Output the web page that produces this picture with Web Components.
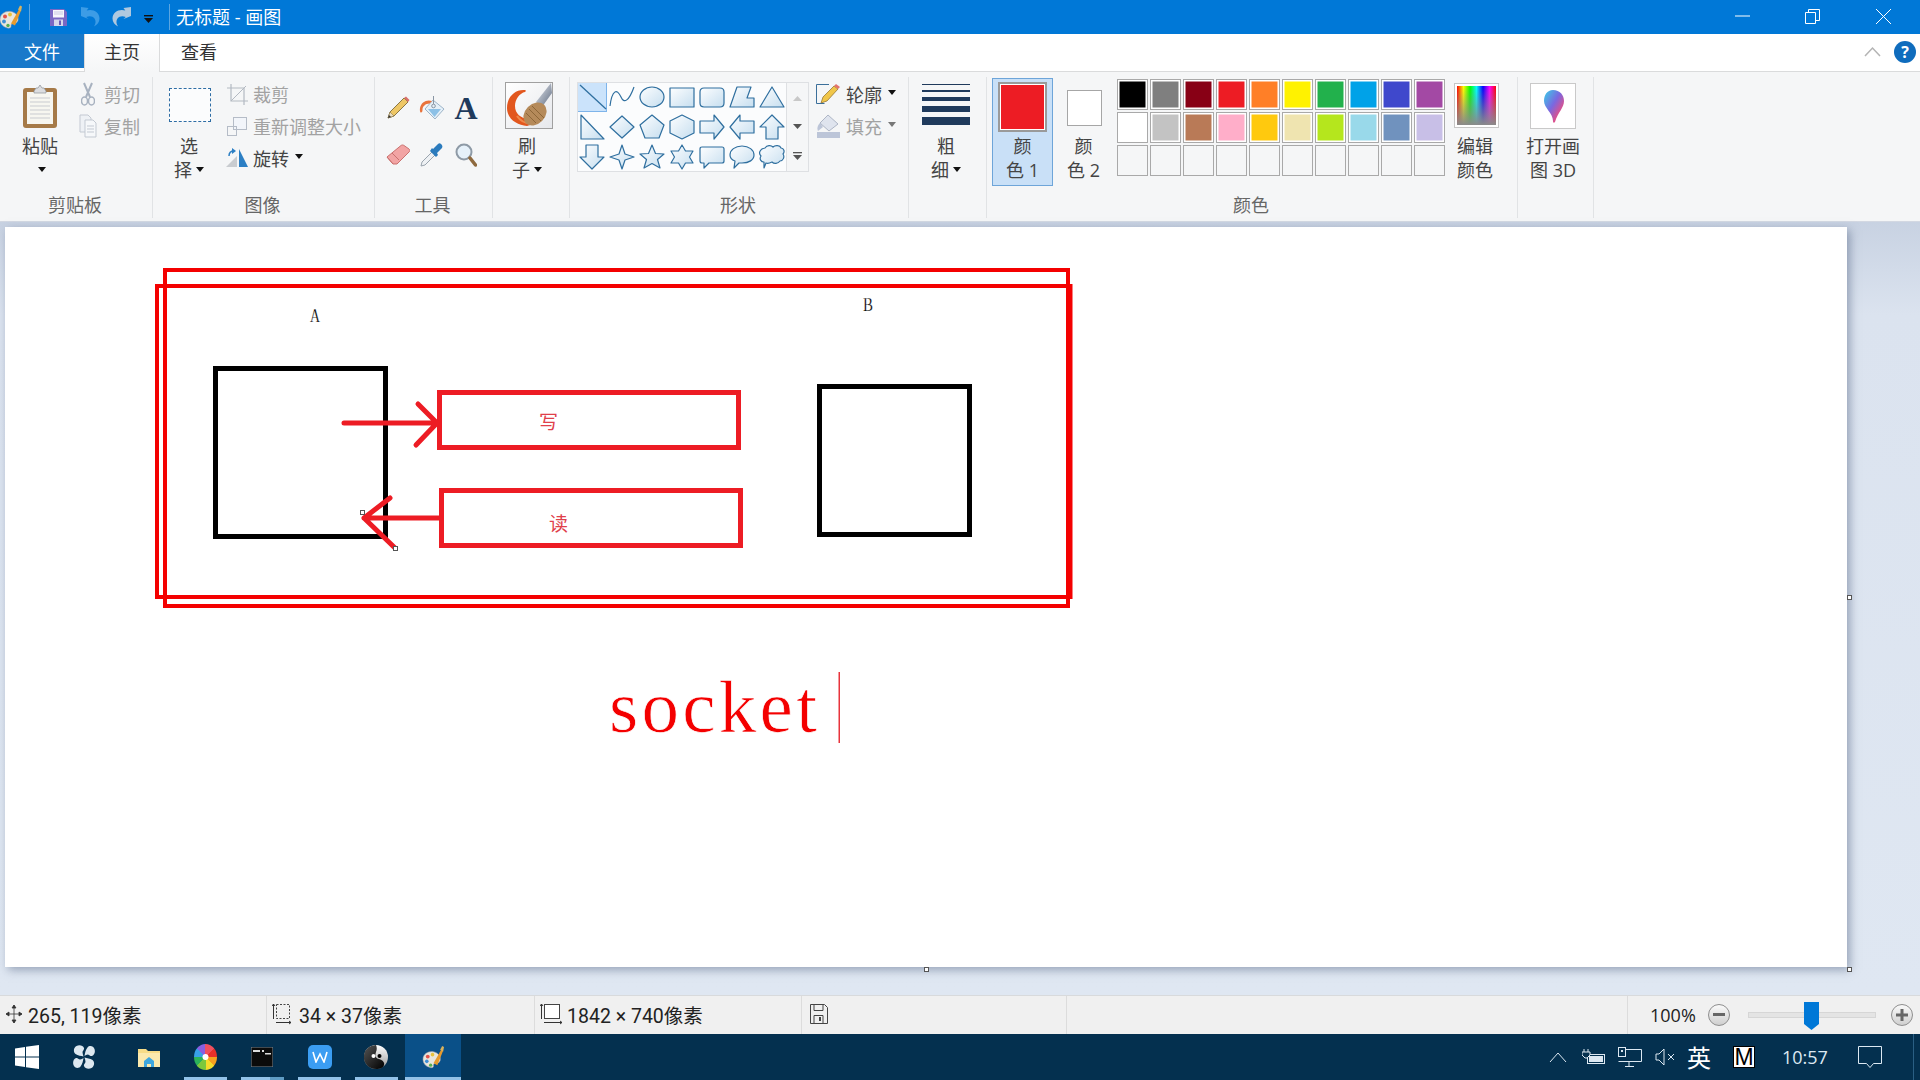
<!DOCTYPE html>
<html lang="zh">
<head>
<meta charset="utf-8">
<title>无标题 - 画图</title>
<style>
  html, body { margin: 0; height: 100%; overflow: hidden; }
  body { font-family: "Open Sans", "Noto Sans CJK SC", sans-serif; }
</style>
</head>
<body>
<paint-app></paint-app>
<script>
// fuente comun para todo el programa
const UI_FONT = '"Open Sans", "Noto Sans CJK SC", sans-serif';

// Icono de la paleta, se usa en la barra de titulo y en la barra de tareas
function paletteIcon(w, h) {
    return `<svg width="${w}" height="${h}" viewBox="0 0 24 26">
        <path d="M1 15C1 9 7 6 12 7c5 1 8 5 7 9-1 3-3 3-5 3-2 0-2 2-2 3 0 2-3 2-5 1-3-1-6-4-6-8z" fill="#e9e6dc" stroke="#8f98a8" stroke-width=".6"/>
        <circle cx="6" cy="12" r="2" fill="#e2524a"/><circle cx="11" cy="10" r="1.9" fill="#e8c23a"/>
        <circle cx="5" cy="17" r="1.9" fill="#3f8fd6"/><circle cx="9" cy="21" r="1.7" fill="#55ad4f"/>
        <path d="M12 19L20 5l2 1-6 15z" fill="#e79a2c"/><path d="M19 5l2-4 2 1-1 5z" fill="#d9b25c"/>
    </svg>`;
}

// Barra de titulo de la ventana
class TitleBar extends HTMLElement {
    constructor() {
        super();
        this.attachShadow({ mode: 'open' });
        this.shadowRoot.innerHTML = `
            <style>
                :host { display: flex; align-items: center; height: 34px; background: #0078d7; color: #fff; font: 18px ${UI_FONT}; }
                .logo { width: 24px; margin-left: -1px; display: flex; }
                .sep { width: 1px; height: 26px; background: #5ba6e2; }
                .qa { display: flex; align-items: flex-start; }
                .win { margin-left: auto; display: flex; }
                .win svg { display: block; }
                .title { margin-left: 6px; line-height: 34px; white-space: pre; }
            </style>
            <span class="logo">${paletteIcon(24, 27)}</span>
            <span class="sep" style="margin-left:6px"></span>
            <span class="qa" style="margin-left:20px">
                <svg style="margin-top:1px" width="17" height="17" viewBox="0 0 17 17"><path d="M0 0h14l3 3v14H0z" fill="#7a68c4"/><rect x="3" y="1" width="11" height="7.500" fill="#f6f6fb"/><path d="M4 3h9M4 5h9" stroke="#c9c9e2"/><rect x="4" y="10.500" width="9" height="6.500" fill="#d5d7ea"/><rect x="9" y="11.500" width="2" height="4.500" fill="#6d5bb5"/></svg>
                <svg style="margin-left:14px;margin-top:-1px" width="19" height="20" viewBox="0 0 19 20"><path d="M0 0l7.500 1-1.800 2.500c6-2 12.800 1.500 12.800 8 0 3.500-2.200 6.500-5.500 8 2-3 2-6 .5-8-1.800-2.500-5-3-8.300-1.500L7.500 12 0 9z" fill="#3d9ce6"/></svg>
                <svg style="margin-left:12px;margin-top:-1px" width="19" height="20" viewBox="0 0 19 20"><path d="M19 0l-7.500 1 1.800 2.500C7.300 1.500.5 5 .5 11.500c0 3.500 2.200 6.500 5.500 8-2-3-2-6-.5-8 1.800-2.500 5-3 8.300-1.500L11.500 12 19 9z" fill="#afc8df"/></svg>
                <svg style="margin-left:13px;margin-top:7px" width="9" height="9" viewBox="0 0 9 9"><rect y="0" width="9" height="1.400" fill="#111"/><path d="M0 3h9L4.500 8z" fill="#111"/></svg>
            </span>
            <span class="sep" style="margin-left:16px"></span>
            <span class="title">无标题 - 画图</span>
            <span class="win">
                <svg width="70" height="34"><rect x="1" y="15.500" width="15" height="1" fill="#fff"/></svg>
                <svg width="71" height="34"><path d="M1.500 12.500h10v11h-10zM4.500 12V9.500h11v11H12" fill="none" stroke="#fff"/></svg>
                <svg width="45" height="34"><path d="M1 9l15 15M16 9L1 24" stroke="#fff" fill="none"/></svg>
            </span>`;
    }
}
customElements.define('title-bar', TitleBar);

// Fila de pestañas del ribbon
class RibbonTabs extends HTMLElement {
    constructor() {
        super();
        this.attachShadow({ mode: 'open' });
        this.shadowRoot.innerHTML = `
            <style>
                :host { display: flex; height: 38px; background: #fff; font: 18px ${UI_FONT}; color: #333; box-sizing: border-box; border-bottom: 1px solid #dadbdc; }
                .tab { display: flex; justify-content: center; padding-top: 6px; box-sizing: border-box; line-height: 24px; }
                .file { width: 84px; height: 34px; background: #1979ca; color: #fff; }
                .home { width: 76px; height: 38px; border: 1px solid #dadbdc; border-width: 0 1px; background: linear-gradient(#fff, #f5f6f7); }
                .view { width: 78px; }
                .right { margin-left: auto; display: flex; align-items: center; padding: 0 4px 2px 0; gap: 13px; }
                .help { width: 22px; height: 22px; border-radius: 50%; background: #0f6cbd; color: #fff; font: bold 16px/22px "Open Sans", sans-serif; text-align: center; }
            </style>
            <div class="tab file">文件</div>
            <div class="tab home">主页</div>
            <div class="tab view">查看</div>
            <div class="right">
                <svg width="17" height="11" viewBox="0 0 17 11"><path d="M1 10l7.500-8L16 10" fill="none" stroke="#b4b4b4" stroke-width="1.500"/></svg>
                <div class="help">?</div>
            </div>`;
    }
}
customElements.define('ribbon-tabs', RibbonTabs);

// Grupo del ribbon con su etiqueta abajo
class RbGroup extends HTMLElement {
    constructor() {
        super();
        this.attachShadow({ mode: 'open' });
    }
    connectedCallback() {
        this.shadowRoot.innerHTML = `
            <style>
                :host { display: flex; flex-direction: column; position: relative; box-sizing: border-box; height: 149px; flex: none; }
                :host::after { content: ''; position: absolute; right: 0; top: 5px; bottom: 3px; width: 1px; background: #e1e3e5; }
                .body { flex: 1; display: flex; min-height: 0; padding-left: var(--pl, 0); }
                .label { height: 30px; margin-bottom: 1px; padding-right: 3px; line-height: 30px; text-align: center; color: #666; font-size: 18px; }
            </style>
            <div class="body"><slot></slot></div>
            <div class="label" part="label">${this.getAttribute('label') || ''}</div>`;
    }
}
customElements.define('rb-group', RbGroup);

// Boton grande: icono arriba y dos lineas de texto
class BigBtn extends HTMLElement {
    constructor() {
        super();
        this.attachShadow({ mode: 'open' });
    }
    connectedCallback() {
        const a = this.getAttribute('a') || '';
        const b = this.getAttribute('b') || '';
        const caret = this.hasAttribute('caret') ? '<i class="caret"></i>' : '';
        this.shadowRoot.innerHTML = `
            <style>
                :host { display: block; flex: none; box-sizing: border-box; --top: 0px; }
                :host([sel]) { --top: 6px; margin-top: 6px; height: 108px; background: #c9e0f7; box-shadow: inset 0 0 0 1px #6ea5d9; }
                .icon { height: calc(62px - var(--top)); padding-top: calc(5px - var(--top) / 2); box-sizing: border-box; display: flex; align-items: center; justify-content: center; }
                .line { height: 24px; line-height: 24px; text-align: center; white-space: nowrap; color: #444; font-size: 18px; }
                .caret { display: inline-block; width: 0; height: 0; margin-left: 4px; vertical-align: 5px; border: 4px solid transparent; border-top: 5px solid #111; border-bottom: 0; }
            </style>
            <div class="icon"><slot></slot></div>
            <div class="line">${a}</div>
            <div class="line">${b}${caret}</div>`;
    }
}
customElements.define('big-btn', BigBtn);

// Boton pequeño con icono y texto en una fila
class SmallBtn extends HTMLElement {
    constructor() {
        super();
        this.attachShadow({ mode: 'open' });
    }
    connectedCallback() {
        const caret = this.hasAttribute('caret') ? '<i class="caret"></i>' : '';
        this.shadowRoot.innerHTML = `
            <style>
                :host { display: flex; align-items: center; height: 32px; color: #444; font-size: 18px; white-space: nowrap; }
                :host([off]) { color: #a2a2a2; }
                .icon { width: 22px; margin-right: 5px; display: flex; justify-content: center; }
                .caret { display: inline-block; width: 0; height: 0; margin-left: 6px; margin-top: -4px; border: 4px solid transparent; border-top: 5px solid #111; border-bottom: 0; }
                :host([off]) .caret { border-top-color: #777; }
            </style>
            <span class="icon"><slot></slot></span>
            <span>${this.getAttribute('label')}</span>${caret}`;
    }
}
customElements.define('small-btn', SmallBtn);

// Galeria de formas
const SHAPES = [
    '', 'M3 24C5 8 10 6 14 15c3 7 8 4 13-10', 'E', 'M3 6h24v19H3z', 'M7 6h16q4 0 4 4v11q0 4-4 4H7q-4 0-4-4V10q0-4 4-4z', 'M3 25L10 5h14l-4 11h7v9z', 'M15 5l12 20H3z',
    'M4 3l23 24H4z', 'M15 4l12 11-12 11L3 15z', 'M15 3l12 10-5 13H8L3 13z', 'M15 3l12 6v12l-12 6-12-6V9z', 'M3 9h14V3l10 12-10 12v-6H3z', 'M27 9H13V3L3 15l10 12v-6h14z', 'M15 3l12 12h-6v12H9V15H3z',
    'M9 3h12v12h6L15 27 3 15h6z', 'M15 3l3 9 9 3-9 3-3 9-3-9-9-3 9-3z', 'M15 3l3.500 8.500 8.500.5-6.500 5.500L23 26l-8-4.500L7 26l2.500-8.500L3 12l8.500-.5z', 'M15 3l3.500 6H26l-3.500 6 3.500 6h-7.500L15 27l-3.500-6H4l3.500-6L4 9h7.500z',
    'M5 5h20q2 0 2 2v12q0 2-2 2H12l-5 5v-5H5q-2 0-2-2V7q0-2 2-2z', 'M15 4c7 0 12 4 12 9s-5 8-12 8h-3l-5 5 1-7c-3-1-5-3-5-6 0-5 5-9 12-9z', 'M8 6c2-3 6-3 8-1 2-2 7-2 8 1 3 0 4 4 2 6 2 3 0 7-3 7-2 3-6 3-8 1-2 1-4 2-6 1l-2 5v-6c-3 0-5-3-3-6-3-3-1-7 4-8z'
];

class ShapeGallery extends HTMLElement {
    constructor() {
        super();
        this.attachShadow({ mode: 'open' });
        const cells = SHAPES.map((d, i) => {
            if (i === 0) return `<div class="cell sel"><svg width="30" height="30"><path d="M3 3l26 24" stroke="#2f6f9f" stroke-width="1.300"/></svg></div>`;
            const inner = d === 'E'
                ? `<ellipse cx="15" cy="15" rx="12" ry="10"/>`
                : `<path d="${d}"${i === 1 ? ' style="fill:none"' : ''}/>`;
            return `<div class="cell"><svg width="30" height="30">${inner}</svg></div>`;
        }).join('');
        this.shadowRoot.innerHTML = `
            <style>
                :host { display: flex; flex: none; height: 90px; margin-top: 10px; }
                .grid { display: grid; grid-template-columns: repeat(7, 30px); grid-auto-rows: 30px; background: #fbfcfd; outline: 1px solid #dee0e3; outline-offset: -1px; }
                .cell svg { display: block; fill: url(#sg); stroke: #2f6f9f; stroke-width: 1.200; stroke-linejoin: round; }
                .sel { background: #cbe3fb; box-shadow: inset 0 0 0 1px #7eb4ea; }
                .scroll { width: 22px; display: grid; grid-template-rows: 1fr 1fr 1fr; border: 1px solid #dee0e3; border-left: 0; box-sizing: border-box; justify-items: center; align-items: center; }
                .defs { position: absolute; width: 0; height: 0; }
            </style>
            <svg class="defs"><defs><linearGradient id="sg" x1="0" y1="0" x2="1" y2="1"><stop offset="0" stop-color="#fdfeff"/><stop offset="1" stop-color="#c6deef"/></linearGradient></defs></svg>
            <div class="grid">${cells}</div>
            <div class="scroll">
                <svg width="9" height="6"><path d="M0 6l4.500-5L9 6z" fill="#c8c8c8"/></svg>
                <svg width="9" height="6"><path d="M0 0l4.500 5L9 0z" fill="#555"/></svg>
                <svg width="9" height="8"><rect width="9" height="1.300" fill="#555"/><path d="M0 3h9L4.500 8z" fill="#555"/></svg>
            </div>`;
    }
}
customElements.define('shape-gallery', ShapeGallery);

// Paleta de colores de 3 filas
const COLORS = ['#000000', '#7f7f7f', '#880015', '#ed1c24', '#ff7f27', '#fff200', '#22b14c', '#00a2e8', '#3f48cc', '#a349a4',
    '#ffffff', '#c3c3c3', '#b97a57', '#ffaec9', '#ffc90e', '#efe4b0', '#b5e61d', '#99d9ea', '#7092be', '#c8bfe7'];

class ColorGrid extends HTMLElement {
    constructor() {
        super();
        this.attachShadow({ mode: 'open' });
        const cells = COLORS.map(c => `<div class="c on" style="background:${c}"></div>`).join('') + '<div class="c"></div>'.repeat(10);
        this.shadowRoot.innerHTML = `
            <style>
                :host { display: grid; flex: none; grid-template-columns: repeat(10, 31px); grid-auto-rows: 31px; gap: 2px; margin: 7px 0 0 3px; height: 97px; }
                .c { border: 1px solid #a9a9a9; box-sizing: border-box; }
                .on { box-shadow: inset 0 0 0 1.500px #fff; }
            </style>${cells}`;
    }
}
customElements.define('color-grid', ColorGrid);

// Ribbon completo, cada grupo con sus botones
class PaintRibbon extends HTMLElement {
    constructor() {
        super();
        this.attachShadow({ mode: 'open' });
        this.shadowRoot.innerHTML = `
            <style>
                :host { display: flex; height: 150px; box-sizing: border-box; background: #f5f6f7; border-bottom: 1px solid #d3d8e2; font: 18px ${UI_FONT}; color: #444; }
                svg { display: block; flex: none; }
                .col { display: flex; flex-direction: column; padding-top: 6px; flex: none; }
                .tools { display: grid; grid-template-columns: repeat(3, 34px); grid-auto-rows: 47px; padding: 12px 0 0 6px; justify-items: center; align-items: center; }
                .font-a { font: bold 32px/1 "Liberation Serif", serif; color: #1f3a5c; }
                .lines { display: flex; flex-direction: column; width: 48px; margin-top: -2px; }
                .lines i { display: block; background: #1f3a5c; }
                .rainbow { width: 43px; height: 43px; margin-left: 2px; box-sizing: border-box; border: 2px solid #fff; outline: 1px solid #c6c6c6; background: linear-gradient(rgba(128,128,128,0), #8a8a8a), linear-gradient(90deg, #f00, #ff0, #0f0, #0ff, #00f, #f0f, #f00); }
                .sw1 { width: 47px; height: 48px; box-sizing: border-box; background: #ed1c24; border: 2px solid #fff; outline: 2px solid #9a9a9a; outline-offset: -1px; }
                .sw2 { width: 35px; height: 36px; box-sizing: border-box; background: #fff; border: 1px solid #a6a6a6; margin-top: 4px; }
                .dash { width: 42px; height: 34px; margin-left: 2px; box-sizing: border-box; border: 1px dashed #2e6da4; background: #fbfcfd; margin-top: -1px; }
            </style>

            <rb-group label="剪贴板" style="width:153px;--pl:19px">
                <big-btn a="粘贴" caret style="width:42px">
                    <svg width="34" height="44" viewBox="0 0 34 44"><rect x="0" y="4" width="34" height="40" rx="3" fill="#a67a48"/><rect x="4" y="8" width="26" height="32" fill="#f7f6f0"/><path d="M7 14h20M7 18h20M7 22h20M7 26h20M7 30h20M7 34h20" stroke="#c9cbd0"/><path d="M11 7l2-3h2l2-3 2 3h2l2 3v2H11z" fill="#dcdde0" stroke="#8b8f96" stroke-width=".7"/></svg>
                </big-btn>
                <div class="col" style="margin-left:16px">
                    <small-btn label="剪切" off><svg width="14" height="24" viewBox="0 0 14 24"><path d="M3 1l6 14M11 1L5 15" stroke="#a8b2c0" stroke-width="2" fill="none"/><ellipse cx="3.500" cy="19" rx="3" ry="4" fill="none" stroke="#a8b2c0" stroke-width="1.500"/><ellipse cx="10.500" cy="19" rx="3" ry="4" fill="none" stroke="#a8b2c0" stroke-width="1.500"/></svg></small-btn>
                    <small-btn label="复制" off><svg width="18" height="24" viewBox="0 0 18 24"><path d="M1 1h8l3 3v14H1z" fill="#eef1f5" stroke="#c3c9d2"/><path d="M6 6h8l3 3v14H6z" fill="#f6f8fa" stroke="#c3c9d2"/><path d="M8 12h7M8 15h7M8 18h7" stroke="#c3c9d2"/></svg></small-btn>
                </div>
            </rb-group>

            <rb-group label="图像" style="width:222px;--pl:11px">
                <big-btn a="选" b="择" caret style="width:50px"><div class="dash"></div></big-btn>
                <div class="col" style="margin-left:12px">
                    <small-btn label="裁剪" off><svg width="21" height="21" viewBox="0 0 21 21"><path d="M4 0v17h17M0 4h17v17" fill="none" stroke="#b3b9c2" stroke-width="1.200"/><path d="M4 17L19 2" stroke="#b3b9c2"/></svg></small-btn>
                    <small-btn label="重新调整大小" off><svg width="20" height="19" viewBox="0 0 20 19"><rect x="6.500" y=".5" width="13" height="12" fill="#f2f5fa" stroke="#b5bcc7"/><rect x=".5" y="9.500" width="9" height="9" fill="none" stroke="#b5bcc7"/></svg></small-btn>
                    <small-btn label="旋转" caret><svg width="22" height="20" viewBox="0 0 22 20"><path d="M13 1l9 18h-9z" fill="#2c7fc4"/><path d="M11 19H0l11-11z" fill="#c9ccd0"/><path d="M3 8c0-3 2-5 5-5" fill="none" stroke="#2c7fc4" stroke-width="1.500"/><path d="M6 0l4 3-4 3z" fill="#2c7fc4"/></svg></small-btn>
                </div>
            </rb-group>

            <rb-group label="工具" style="width:118px">
                <div class="tools">
                    <svg width="23" height="23" viewBox="0 0 23 23"><path d="M1 22l2-6L17 2l4 4L7 20z" fill="#eec766" stroke="#7d6a3a" stroke-width=".9"/><path d="M1 22l2-6 4 4z" fill="#eadcc0" stroke="#7d6a3a" stroke-width=".5"/><path d="M1 22l1-3 2 2z" fill="#333"/><path d="M17 2l2-1.500 3.500 3.500L21 6z" fill="#d9706a"/></svg>
                    <svg width="26" height="24" viewBox="0 0 26 24"><path d="M14 4l11 9-9 10L6 13z" fill="#e6f0f8" stroke="#9db4c8"/><path d="M9 13h13l-6.500 8z" fill="#8cc0e6"/><path d="M13 5c-5-2-11 1-12 7-.3 2 0 4 .5 4.500 1.500.5 2-1 2-3 0-3 3-6 7-6z" fill="#e9733c"/><circle cx="14.500" cy="10" r="1.800" fill="none" stroke="#8895a3"/><path d="M14.500 0v8" stroke="#8895a3"/></svg>
                    <span class="font-a">A</span>
                    <svg width="24" height="21" viewBox="0 0 24 21"><path d="M1 13L15 1.500c1-.7 2-.7 3 0l5 3.500c1 1 1 2 0 3L11 20H7z" fill="#f2a4a4" stroke="#c9716f"/><path d="M1 13l6 7M6 9l7 7" fill="none" stroke="#c9716f"/></svg>
                    <svg width="24" height="24" viewBox="0 0 24 24"><path d="M1 23l1-4L12 9l3 3L5 22z" fill="#eef1f4" stroke="#9aa4ae"/><path d="M10 8l6 6 2-2-1-2 5-5c1-2 0-3-1-4s-2-1-3 0l-5 5-1-1z" fill="#2b7bbd"/></svg>
                    <svg width="22" height="24" viewBox="0 0 22 24"><circle cx="9" cy="9" r="7.500" fill="#e6f1fa" stroke="#8e9aa6" stroke-width="2"/><path d="M15 15l5.500 7" stroke="#8f6a3f" stroke-width="3.500" stroke-linecap="round"/></svg>
                </div>
            </rb-group>

            <rb-group label="" style="width:77px;--pl:4px">
                <big-btn a="刷" b="子" caret style="width:60px">
                    <svg style="margin-left:4px" width="48" height="47" viewBox="0 0 48 47"><defs><linearGradient id="bg" x1="0" y1="0" x2="1" y2="1"><stop offset="0" stop-color="#fff"/><stop offset="1" stop-color="#e6e8ec"/></linearGradient><linearGradient id="hd" x1="0" y1="0" x2="1" y2="1"><stop offset="0" stop-color="#e8ebf0"/><stop offset="1" stop-color="#5d6a80"/></linearGradient></defs><rect x=".5" y=".5" width="47" height="46" fill="url(#bg)" stroke="#a0a0a0"/><path d="M46 1L31 20l6 5L47 11z" fill="url(#hd)"/><path d="M20 8c1 0 1 1 0 2-5 1-10 7-10 14 0 8 6 12 13 13l8 4-9 3C12 43 2 37 2 26 2 15 10 7 20 8z" fill="#e2571e"/><path d="M12 34c4 6 10 8 17 7" fill="none" stroke="#f08a4a" stroke-width="2"/><ellipse cx="30" cy="32" rx="13" ry="10" transform="rotate(-45 30 32)" fill="#b58a5a"/><path d="M24 27l12 12M27 24l12 12M21 31l10 10" stroke="#8d6638"/></svg>
                </big-btn>
            </rb-group>

            <rb-group label="形状" style="width:339px;--pl:7px">
                <shape-gallery></shape-gallery>
                <div class="col" style="margin-left:10px">
                    <small-btn label="轮廓" caret><svg style="margin-left:-4px" width="25" height="20" viewBox="0 0 25 20"><path d="M13 .5H.5v19h8" fill="none" stroke="#3b6f9a"/><path d="M5 19l2-6L18 2l4 3-11 12z" fill="#f0c64a" stroke="#8a6a2a" stroke-width=".7"/><path d="M18 2l2-2 4 3-2 2z" fill="#e3736d"/></svg></small-btn>
                    <small-btn label="填充" off caret><svg style="margin-left:-4px" width="25" height="24" viewBox="0 0 25 24"><path d="M12 1l10 9-9 7-9-8z" fill="#dfe4ee" stroke="#aeb6c6"/><path d="M1 18h23v6H1z" fill="#bcc5d8"/><path d="M4 9c-3 3-3 6-2 8l5-4z" fill="#bcc5d8"/></svg></small-btn>
                </div>
            </rb-group>

            <rb-group label="" style="width:78px;--pr:4px">
                <big-btn a="粗" b="细" caret style="width:74px">
                    <div class="lines">
                        <i style="height:1px"></i><i style="height:2px;margin-top:5px"></i><i style="height:4px;margin-top:5px"></i><i style="height:6px;margin-top:5px"></i><i style="height:8px;margin-top:5px"></i>
                    </div>
                </big-btn>
            </rb-group>

            <rb-group label="颜色" style="width:531px;--pl:5px">
                <big-btn a="颜" b="色 1" sel style="width:61px"><div class="sw1"></div></big-btn>
                <big-btn a="颜" b="色 2" style="width:61px"><div class="sw2" style="margin-left:1px"></div></big-btn>
                <color-grid></color-grid>
                <big-btn a="编辑" b="颜色" style="width:52px;margin-left:4px"><div class="rainbow"></div></big-btn>
            </rb-group>

            <rb-group label="" style="width:76px">
                <big-btn a="打开画" b="图 3D" style="width:70px">
                    <svg width="46" height="46" viewBox="0 0 46 46"><defs><linearGradient id="drop" x1="0" y1="0" x2="1" y2="1"><stop offset="0" stop-color="#37d0e8"/><stop offset=".45" stop-color="#7a68e0"/><stop offset=".75" stop-color="#e0508a"/><stop offset="1" stop-color="#f29a2e"/></linearGradient></defs><rect x=".5" y=".5" width="45" height="45" fill="#fff" stroke="#c9c9c9"/><path d="M23 7c7 0 11 5 11 11 0 7-6 11-9 21-1 1-2 1-2-1 0-8-9-13-9-20C14 12 17 7 23 7z" fill="url(#drop)"/></svg>
                </big-btn>
            </rb-group>`;
    }
}
customElements.define('paint-ribbon', PaintRibbon);

// Lienzo: aqui las posiciones son el contenido mismo del dibujo
class PaintCanvas extends HTMLElement {
    constructor() {
        super();
        this.attachShadow({ mode: 'open' });
        this.shadowRoot.innerHTML = `
            <style>
                :host { display: block; position: relative; width: 1842px; height: 740px; background: #fff; box-shadow: 3px 3px 9px rgba(90,105,135,.55); }
                svg { display: block; }
                .h { position: absolute; width: 5px; height: 5px; box-sizing: border-box; background: #fff; border: 1px solid #555; }
            </style>
            <svg width="1842" height="740" viewBox="5 227 1842 740">
                <g fill="none" stroke="#f40000" stroke-width="4">
                    <rect x="165" y="270" width="903" height="336"/>
                    <rect x="157" y="286" width="913" height="311"/>
                </g>
                <path d="M1070 284v315" stroke="#f40000" stroke-width="5"/>
                <g fill="none" stroke="#000" stroke-width="5">
                    <rect x="215.500" y="368.500" width="170" height="168"/>
                    <rect x="819.500" y="386.500" width="150" height="148"/>
                </g>
                <g fill="none" stroke="#ed1c24" stroke-width="5">
                    <rect x="439.500" y="392.500" width="299" height="55"/>
                    <rect x="441.500" y="490.500" width="299" height="55"/>
                </g>
                <g fill="none" stroke="#ed1c24" stroke-width="5" stroke-linecap="round" stroke-linejoin="round">
                    <path d="M344 423h92M418 404l19 19-21 22"/>
                    <path d="M440 518h-76M390 498l-26 20 31 30"/>
                </g>
                <text x="310" y="322" textLength="10" lengthAdjust="spacingAndGlyphs" font-family="Liberation Serif" font-size="19" stroke="#fff" stroke-width=".25">A</text>
                <text x="863" y="311" textLength="10" lengthAdjust="spacingAndGlyphs" font-family="Liberation Serif" font-size="19" stroke="#fff" stroke-width=".25">B</text>
                <text x="539" y="429" fill="#e0404a" font-family="Noto Sans CJK SC" font-size="19">写</text>
                <text x="549" y="531" fill="#e0404a" font-family="Noto Sans CJK SC" font-size="19">读</text>
                <text x="609" y="732" textLength="208" fill="#f40000" stroke="#fff" stroke-width=".7" font-family="Liberation Serif" font-size="75">socket</text>
                <rect x="838.500" y="672" width="1.500" height="71" fill="#e8343c"/>
            </svg>
            <i class="h" style="left:355px;top:283px"></i>
            <i class="h" style="left:388px;top:319px"></i>
            <i class="h" style="left:1842px;top:368px"></i>
            <i class="h" style="left:919px;top:740px"></i>
            <i class="h" style="left:1842px;top:740px"></i>`;
    }
}
customElements.define('paint-canvas', PaintCanvas);

// Celda de la barra de estado
class StatCell extends HTMLElement {
    constructor() {
        super();
        this.attachShadow({ mode: 'open' });
        this.shadowRoot.innerHTML = `
            <style>
                :host { display: flex; align-items: center; flex: none; box-sizing: border-box; height: 100%; gap: 5px; padding-left: 5px; padding-bottom: 2px; border-right: 1px solid #dcdcdc; }
            </style>
            <slot></slot>`;
    }
}
customElements.define('stat-cell', StatCell);

class StatusBar extends HTMLElement {
    constructor() {
        super();
        this.attachShadow({ mode: 'open' });
        this.shadowRoot.innerHTML = `
            <style>
                :host { display: flex; height: 39px; box-sizing: border-box; background: #f0f0f0; border-top: 1px solid #d8dadc; color: #222; font: 19.500px "Roboto", "Noto Sans CJK SC", sans-serif; }
                svg { display: block; flex: none; }
                .zoom { display: grid; grid-template-columns: 58px 22px 18px 128px 15px 22px; align-items: center; padding-left: 22px; }
                .pct { font: 18px ${UI_FONT}; }
                .track { position: relative; height: 6px; background: #e4e4e4; border: 1px solid #d6d6d6; box-sizing: border-box; }
                .thumb { position: absolute; left: 55px; top: -11px; }
                .rnd { width: 22px; height: 22px; border-radius: 50%; box-sizing: border-box; border: 1px solid #8e8e8e; background: linear-gradient(#fafafa, #cfcfcf); display: flex; align-items: center; justify-content: center; }
            </style>
            <stat-cell style="width:267px">
                <svg width="18" height="20" viewBox="0 0 18 20"><path d="M9 1v18M1 10h16M9 1L7 4h4zM9 19l-2-3h4zM1 10l3-2v4zM17 10l-3-2v4z" stroke="#333" fill="#333" stroke-width=".8"/></svg>
                <span>265, 119像素</span>
            </stat-cell>
            <stat-cell style="width:268px">
                <svg width="22" height="22" viewBox="0 0 22 22"><rect x="4.500" y="1.500" width="13" height="14" fill="none" stroke="#444" stroke-dasharray="2 1.500"/><path d="M1.500 1v15M0 3l1.500-2L3 3M4 19.500h15M17 18l2 1.500-2 1.500" fill="none" stroke="#333"/></svg>
                <span>34 × 37像素</span>
            </stat-cell>
            <stat-cell style="width:267px;gap:3px">
                <svg width="24" height="22" viewBox="0 0 24 22"><rect x="4.500" y="1.500" width="15" height="14" fill="#fff" stroke="#444"/><path d="M1.500 1v15M0 3l1.500-2L3 3M4 19.500h18M20 18l2 1.500-2 1.500" fill="none" stroke="#333"/></svg>
                <span>1842 × 740像素</span>
            </stat-cell>
            <stat-cell style="width:265px;padding-left:8px">
                <svg width="18" height="20" viewBox="0 0 18 20"><path d="M.5.500h14l3 3v16H.5z" fill="none" stroke="#444"/><path d="M4 .5v6h9v-6M4 19.500v-8h9v8" fill="none" stroke="#444"/><rect x="9" y="13" width="2" height="4" fill="#444"/></svg>
            </stat-cell>
            <stat-cell style="width:561px"></stat-cell>
            <div class="zoom">
                <span class="pct">100%</span>
                <div class="rnd"><svg width="12" height="4"><rect width="12" height="3" fill="#666"/></svg></div>
                <span></span>
                <div class="track"><svg class="thumb" width="15" height="28" viewBox="0 0 15 28"><path d="M0 0h15v22l-7.500 6L0 22z" fill="#0078d7"/></svg></div>
                <span></span>
                <div class="rnd"><svg width="12" height="12"><path d="M0 6h12M6 0v12" stroke="#666" stroke-width="3"/></svg></div>
            </div>`;
    }
}
customElements.define('status-bar', StatusBar);

// Boton de la barra de tareas, subrayado si la app esta abierta
class TaskItem extends HTMLElement {
    constructor() {
        super();
        this.attachShadow({ mode: 'open' });
        this.shadowRoot.innerHTML = `
            <style>
                :host { display: flex; align-items: center; justify-content: center; flex: none; width: 57px; height: 46px; box-sizing: border-box; }
                :host([open]) { background: linear-gradient(#93c2e8, #93c2e8) center bottom / 43px 3px no-repeat; }
                :host([active]) { background: linear-gradient(#93c2e8, #93c2e8) center bottom / 100% 3px no-repeat, #0a5088; }
            </style>
            <slot></slot>`;
    }
}
customElements.define('task-item', TaskItem);

class TaskBar extends HTMLElement {
    constructor() {
        super();
        this.attachShadow({ mode: 'open' });
        this.shadowRoot.innerHTML = `
            <style>
                :host { display: flex; height: 46px; background: #04304f; color: #dce8f2; font: 18px ${UI_FONT}; }
                svg { display: block; flex: none; }
                .tray { margin-left: auto; display: flex; align-items: center; height: 100%; margin-right: 31px; }
                .lang { font: 24px "Noto Sans CJK SC", sans-serif; color: #fff; width: 24px; margin-left: 11px; margin-right: 2px; line-height: 46px; }
                .m { width: 22px; height: 22px; margin-left: 20px; background: #fff; color: #000; box-sizing: border-box; border: 1px solid #000; font: 23px/20px "Liberation Sans", sans-serif; text-align: center; }
                .time { width: 48px; margin-left: 27px; font-size: 18px; }
                .edge { width: 1px; height: 46px; background: #2a5f84; margin-right: 6px; }
                .wheel { width: 23px; height: 26px; border-radius: 50%; background: radial-gradient(circle, #fff 0 2.500px, transparent 3.500px), conic-gradient(#f0505f 0 45deg, #e8302a 45deg 90deg, #f7a01f 90deg 135deg, #f4dc2a 135deg 180deg, #7cc83c 180deg 225deg, #2cb35a 225deg 270deg, #38a0e8 270deg 315deg, #8a5fe0 315deg); }
                .wps { width: 24px; height: 24px; border-radius: 5px; background: #3b9df2; display: flex; align-items: center; justify-content: center; }
            </style>
            <task-item style="width:54px"><svg width="24" height="24" viewBox="0 0 24 24"><path d="M0 3.500l10-1.500v9.500H0zM11 1.800L24 0v11.500H11zM0 12.500h10V22L0 20.500zM11 12.500h13V24l-13-1.800z" fill="#fff"/></svg></task-item>
            <task-item style="width:59px"><svg width="22" height="24" viewBox="0 0 22 24"><g fill="#dde8f0"><path d="M10.500 11.500C8 11 5 10.500 2.500 9 0 7 .5 2.500 3.500 1c3-1.500 6.500-.5 7.500 2 .5 1.500-1 2.500-1.500 4 0 1.500.5 3 1 4.500z"/><path d="M11.500 11c.5-3 1-6 3-8.500 2-2.500 6-1.500 7 1.500 1 3 0 6-2.500 7-1.500.5-2.500-1-4-1.500-1.500 0-2.500.8-3.500 1.500z"/><path d="M11.500 12.500c2.500.5 5.500 1 8 2.500 2.500 2 2 6.500-1 8-3 1.500-6.500.5-7.500-2-.5-1.500 1-2.500 1.500-4 0-1.500-.5-3-1-4.500z"/><path d="M10.500 13c-.5 3-1 6-3 8.500-2 2.500-6 1.500-7-1.500-1-3 0-6 2.500-7 1.500-.5 2.500 1 4 1.500 1.500 0 2.500-.8 3.500-1.500z"/></g></svg></task-item>
            <span style="width:7px"></span>
            <task-item><svg width="22" height="20" viewBox="0 0 22 20"><path d="M0 2h8l2 2h12v16H0z" fill="#f7dc87"/><path d="M0 6h22v14H0z" fill="#fbe9ad"/><path d="M6 20v-6l5-4 5 4v6h-3v-3H9v3z" fill="#3fa7df"/></svg></task-item>
            <task-item open><div class="wheel"></div></task-item>
            <task-item open style="background:linear-gradient(90deg,#93c2e8 0 29px,#5f9cc4 29px 43px) center bottom / 43px 3px no-repeat"><svg style="margin-right:2px" width="22" height="20" viewBox="0 0 22 20"><rect width="22" height="20" fill="#0b0b0b" stroke="#7f8a94"/><rect x="2" y="3" width="7" height="2" fill="#ddd"/><rect x="11" y="3" width="2" height="2" fill="#ddd"/><rect x="14" y="6" width="6" height="1.500" fill="#ddd"/></svg></task-item>
            <task-item open><div class="wps"><svg width="16" height="12" viewBox="0 0 16 12"><path d="M1 1l3 10 4-8 4 8 3-10" fill="none" stroke="#fff" stroke-width="1.600"/></svg></div></task-item>
            <task-item open><svg style="margin-right:1px" width="24" height="26" viewBox="0 0 24 24"><defs><linearGradient id="yy" x1="0" x2="1" y1="0" y2="1"><stop offset="0" stop-color="#555"/><stop offset="1" stop-color="#000"/></linearGradient><linearGradient id="yw" x1="0" x2="0" y1="0" y2="1"><stop offset="0" stop-color="#fff"/><stop offset="1" stop-color="#999"/></linearGradient></defs><circle cx="12" cy="12" r="12" fill="url(#yw)"/><path d="M12 0a12 12 0 0 0-5 23c5 2 12 1 13-3 1-3-2-5-5-6-4-1-4-4-3-7 1-2 1-5 0-7z" fill="url(#yy)"/><circle cx="9.500" cy="11" r="2" fill="#fff"/><circle cx="15.500" cy="11" r="2" fill="#000"/></svg></task-item>
            <task-item active style="width:56px">${paletteIcon(23, 25)}</task-item>
            <div class="tray">
                <svg width="18" height="11" viewBox="0 0 18 11"><path d="M1 10l8-9 8 9" fill="none" stroke="#dce8f2"/></svg>
                <svg style="margin-left:15px" width="24" height="16" viewBox="0 0 24 16"><rect x="5.500" y="5.500" width="17" height="9" fill="none" stroke="#dce8f2"/><rect x="7" y="7" width="14" height="6" fill="#dce8f2"/><path d="M2 0v3M6 0v3M0 3h8v3l-3 3H3L0 6z" fill="#04304f" stroke="#dce8f2"/></svg>
                <svg style="margin-left:12px" width="24" height="20" viewBox="0 0 24 20"><path d="M6 2.500h17.500v12H.5M11 15v4M7 19.500h9" fill="none" stroke="#dce8f2"/><rect x=".5" y=".5" width="7" height="9" fill="#04304f" stroke="#dce8f2"/><rect x="3" y="3" width="2" height="2" fill="#dce8f2"/></svg>
                <svg style="margin-left:13px" width="21" height="18" viewBox="0 0 21 18"><path d="M1 6h3l5-5v16l-5-5H1z" fill="none" stroke="#dce8f2"/><path d="M13 6l6 6M19 6l-6 6" stroke="#dce8f2"/></svg>
                <span class="lang">英</span>
                <span class="m">M</span>
                <span class="time">10:57</span>
                <svg style="margin-left:28px" width="24" height="23" viewBox="0 0 24 23"><path d="M.5.500h23v17h-8l-3.500 4-3.500-4h-8z" fill="none" stroke="#dce8f2"/></svg>
            </div>
            <span class="edge"></span>`;
    }
}
customElements.define('task-bar', TaskBar);

// Ventana completa
class PaintApp extends HTMLElement {
    constructor() {
        super();
        this.attachShadow({ mode: 'open' });
        this.shadowRoot.innerHTML = `
            <style>
                :host { display: flex; flex-direction: column; width: 1920px; height: 1080px; overflow: hidden; font-family: ${UI_FONT}; }
                .work { flex: 1; padding: 5px 0 0 5px; background: linear-gradient(#c8d2e2, #dbe3ef 12%, #dfe7f2); min-height: 0; }
            </style>
            <title-bar></title-bar>
            <ribbon-tabs></ribbon-tabs>
            <paint-ribbon></paint-ribbon>
            <div class="work"><paint-canvas></paint-canvas></div>
            <status-bar></status-bar>
            <task-bar></task-bar>`;
    }
}
customElements.define('paint-app', PaintApp);
</script>
</body>
</html>
